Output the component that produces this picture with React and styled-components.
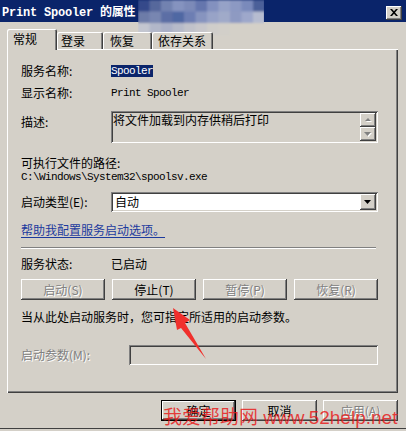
import React from 'react';
import styled, { createGlobalStyle, css } from 'styled-components';

const GlobalStyle = createGlobalStyle`
  html, body { margin: 0; padding: 0; background: #d4d0c8; }
  body {
    font-family: "Noto Sans CJK SC", "Liberation Sans", sans-serif;
    font-size: 12px;
    color: #000;
  }
  * { box-sizing: border-box; }
`;

const raised = css`
  box-shadow: inset -1px -1px #404040, inset 1px 1px #ffffff,
    inset -2px -2px #808080, inset 2px 2px #d4d0c8;
`;

const sunken = css`
  box-shadow: inset 1px 1px #808080, inset -1px -1px #ffffff,
    inset 2px 2px #404040, inset -2px -2px #d4d0c8;
`;

const disabledText = css`
  color: #808080;
  text-shadow: 1px 1px 0 #ffffff;
`;

const Window = styled.div`
  position: relative;
  width: 406px;
  height: 431px;
  overflow: hidden;
  background: #d4d0c8;
  box-shadow: inset 0 -2px 0 #d4d0c8, inset 0 -3px 0 #404040;
`;

const TitleBar = styled.div`
  height: 22px;
  background: #0a246a;
  display: flex;
  align-items: center;
  justify-content: space-between;
  padding: 3px 4px 0 2px;
`;

const TitleText = styled.div`
  color: #ffffff;
  font-family: "Liberation Mono", "Noto Sans CJK SC", monospace;
  font-weight: bold;
  font-size: 12px;
  line-height: 14px;
  letter-spacing: -0.2px;
  white-space: pre;
`;

const CloseButton = styled.div`
  width: 16px;
  height: 14px;
  background: #d4d0c8;
  ${raised};
  display: flex;
  align-items: center;
  justify-content: center;
  padding-bottom: 1px;
`;

const Body = styled.div`
  padding: 7px 8px 0 7px;
`;

const TabStrip = styled.div`
  position: relative;
  z-index: 1;
  height: 20px;
  display: flex;
  align-items: flex-start;
`;

const Tab = styled.div`
  width: ${p => p.$w}px;
  height: ${p => (p.$active ? 21 : 17)}px;
  margin-top: ${p => (p.$active ? 0 : 3)}px;
  background: #d4d0c8;
  border-radius: 2px 2px 0 0;
  box-shadow: inset 1px 1px #ffffff, inset -1px 0 #404040, inset -2px 0 #808080;
  padding: ${p => (p.$active ? 4 : 3)}px 0 0 ${p => p.$pl}px;
  line-height: 12px;
  white-space: nowrap;
`;

const Panel = styled.div`
  width: 391px;
  height: 344px;
  padding: 16px 20px 0 14px;
  box-shadow: inset 1px 1px #ffffff, inset -1px -1px #404040, inset -2px -2px #808080;
  display: flex;
  flex-direction: column;
`;

const Row = styled.div`
  display: flex;
  align-items: ${p => (p.$top ? 'flex-start' : 'center')};
  margin-top: ${p => p.$mt || 0}px;
  min-height: 12px;
  line-height: 12px;
`;

const Label = styled.div`
  width: ${p => p.$w || 90}px;
  flex: none;
  line-height: 12px;
  white-space: nowrap;
  padding-top: ${p => p.$pt || 0}px;
  ${p => p.$disabled && disabledText};
`;

const Mono = styled.span`
  font-family: "Liberation Mono", monospace;
  font-size: 11px;
  letter-spacing: -0.6px;
  line-height: 12px;
  height: 12px;
  display: inline-block;
  white-space: pre;
  background: ${p => (p.$selected ? '#0a246a' : 'transparent')};
  color: ${p => (p.$selected ? '#ffffff' : '#000000')};
`;

const Plain = styled.span`
  line-height: 12px;
  white-space: nowrap;
`;

const DescBox = styled.div`
  width: 267px;
  height: 32px;
  background: #d4d0c8;
  ${sunken};
  display: flex;
  padding: 2px 2px 2px 2px;
`;

const DescText = styled.div`
  flex: 1;
  padding: 1px 0 0 0;
  line-height: 12px;
`;

const ScrollColumn = styled.div`
  width: 16px;
  display: flex;
  flex-direction: column;
`;

const ScrollButton = styled.div`
  width: 16px;
  height: ${p => p.$h}px;
  background: #d4d0c8;
  ${raised};
  display: flex;
  align-items: center;
  justify-content: center;
`;

const Select = styled.div`
  width: 267px;
  height: 20px;
  background: #ffffff;
  ${sunken};
  display: flex;
  align-items: center;
  padding: 2px 2px 2px 4px;
`;

const SelectValue = styled.div`
  flex: 1;
  line-height: 12px;
`;

const DropButton = styled.div`
  width: 16px;
  height: 16px;
  background: #d4d0c8;
  ${raised};
  display: flex;
  align-items: center;
  justify-content: center;
`;

const HelpLink = styled.a`
  color: #1c3a9e;
  text-decoration: underline;
  text-underline-offset: 2px;
  line-height: 12px;
  cursor: pointer;
`;

const Separator = styled.div`
  width: 355px;
  height: 2px;
  margin-top: ${p => p.$mt}px;
  border-top: 1px solid #808080;
  border-bottom: 1px solid #ffffff;
`;

const ButtonRow = styled.div`
  display: flex;
  justify-content: space-between;
  margin-top: ${p => p.$mt}px;
`;

const Button = styled.div`
  width: ${p => p.$w}px;
  height: 21px;
  background: #d4d0c8;
  ${raised};
  ${p =>
    p.$default &&
    css`
      box-shadow: inset 0 0 0 1px #000000, inset -2px -2px #404040, inset 2px 2px #ffffff,
        inset -3px -3px #808080;
    `};
  display: flex;
  align-items: center;
  justify-content: center;
  line-height: 12px;
  white-space: nowrap;
  ${p => p.$disabled && disabledText};
`;

const ParamBox = styled.div`
  width: 249px;
  height: 20px;
  background: #d4d0c8;
  ${sunken};
`;

const DialogButtons = styled.div`
  display: flex;
  justify-content: flex-end;
  gap: 6px;
  margin-top: 7px;
`;

const Mosaic = styled.svg`
  position: absolute;
  left: 138px;
  top: 0;
  pointer-events: none;
`;

const ArrowOverlay = styled.svg`
  position: absolute;
  left: 0;
  top: 0;
  pointer-events: none;
`;

const Watermark = styled.div`
  position: absolute;
  left: 163px;
  top: 408px;
  font-family: "Liberation Sans", "Noto Sans CJK SC", sans-serif;
  font-size: 19px;
  line-height: 20px;
  color: rgba(232, 24, 24, 0.82);
  white-space: pre;
  pointer-events: none;
`;

const UpArrow = ({ color = '#808080', shadow = true }) => (
  <svg width="7" height="5" viewBox="0 0 7 5">
    {shadow && <polygon points="4,1 7,4 1,4" fill="#ffffff" />}
    <polygon points="3,0 6,3 0,3" fill={color} />
  </svg>
);

const DownArrow = ({ color = '#808080', shadow = true, w = 7 }) => (
  <svg width={w + 1} height="5" viewBox={`0 0 ${w + 1} 5`}>
    {shadow && <polygon points={`1,1 ${w + 1},1 ${(w + 2) / 2},5`} fill="#ffffff" />}
    <polygon points={`0,0 ${w},0 ${w / 2},4`} fill={color} />
  </svg>
);

const mosaicRows = [
  ['#34488a', '#56689c', '#7282b0', '#8593bf', '#7b8ab8', '#6576ad', '#8391bf', '#96a2c7', '#8c99c3', '#7a8abb', '#4c6099'],
  ['#6d7ba8', '#7886b1', '#5c6ea5', '#5068a3', '#6d7eb3', '#8794bf', '#98a3c7', '#a0aac9', '#8e9ac2', '#9ea8cb', '#b6bcd0'],
  ['#c3c6d0', '#b2b7c9', '#aab0c7', '#b6bac9', '#c1c2ca', '#c8c7cb', '#cfcdca', '#d2cfc9', '#d4d0c8', '#d4d0c8', '#d4d0c8'],
];

export default function App() {
  return (
    <>
      <GlobalStyle />
      <Window>
        <TitleBar>
          <TitleText>Print Spooler 的属性</TitleText>
          <CloseButton>
            <svg width="8" height="7" viewBox="0 0 8 7">
              <path d="M0 0h2l2 2.2L6 0h2L5 3.5 8 7H6L4 4.8 2 7H0l3-3.5z" fill="#000" />
            </svg>
          </CloseButton>
        </TitleBar>
        <Body>
          <TabStrip>
            <Tab $active $w={50} $pl={6}>常规</Tab>
            <Tab $w={46} $pl={4}>登录</Tab>
            <Tab $w={49} $pl={7}>恢复</Tab>
            <Tab $w={61} $pl={6}>依存关系</Tab>
          </TabStrip>
          <Panel>
            <Row>
              <Label>服务名称:</Label>
              <Mono $selected>Spooler</Mono>
            </Row>
            <Row $mt={10}>
              <Label>显示名称:</Label>
              <Mono>Print Spooler</Mono>
            </Row>
            <Row $mt={12} $top>
              <Label $pt={5}>描述:</Label>
              <DescBox>
                <DescText>将文件加载到内存供稍后打印</DescText>
                <ScrollColumn>
                  <ScrollButton $h={15}><UpArrow /></ScrollButton>
                  <ScrollButton $h={14}><DownArrow /></ScrollButton>
                </ScrollColumn>
              </DescBox>
            </Row>
            <Row $mt={14}>
              <Plain>可执行文件的路径:</Plain>
            </Row>
            <Row $mt={2}>
              <Mono>C:\Windows\System32\spoolsv.exe</Mono>
            </Row>
            <Row $mt={9}>
              <Label>启动类型(E):</Label>
              <Select>
                <SelectValue>自动</SelectValue>
                <DropButton><DownArrow color="#000000" shadow={false} /></DropButton>
              </Select>
            </Row>
            <Row $mt={12}>
              <HelpLink>帮助我配置服务启动选项。</HelpLink>
            </Row>
            <Separator $mt={11} />
            <Row $mt={9}>
              <Label>服务状态:</Label>
              <Plain>已启动</Plain>
            </Row>
            <ButtonRow $mt={9}>
              <Button $w={84} $disabled>启动(S)</Button>
              <Button $w={84}>停止(T)</Button>
              <Button $w={84} $disabled>暂停(P)</Button>
              <Button $w={84} $disabled>恢复(R)</Button>
            </ButtonRow>
            <Row $mt={11}>
              <Plain>当从此处启动服务时，您可指定所适用的启动参数。</Plain>
            </Row>
            <Row $mt={22}>
              <Label $w={108} $disabled>启动参数(M):</Label>
              <ParamBox />
            </Row>
          </Panel>
          <DialogButtons>
            <Button $w={75} $default>确定</Button>
            <Button $w={75}>取消</Button>
            <Button $w={75} $disabled>应用(A)</Button>
          </DialogButtons>
        </Body>

        <Mosaic width="126" height="36" viewBox="0 0 126 36">
          <defs>
            <filter id="soft" x="-5%" y="-5%" width="110%" height="110%">
              <feGaussianBlur stdDeviation="1.2" />
            </filter>
          </defs>
          <g filter="url(#soft)">
            {mosaicRows.map((row, r) =>
              row.map((c, i) => (
                <rect key={`${r}-${i}`} x={i * 11.5} y={r * 11.5} width="12" height="12" fill={c} />
              ))
            )}
          </g>
        </Mosaic>

        <ArrowOverlay width="406" height="431" viewBox="0 0 406 431">
          <polygon points="173,308 190,320 185,323 206,359 181,328 177,330" fill="#f0302c" />
        </ArrowOverlay>

        <Watermark>我爱帮助网 www.52help.net</Watermark>
      </Window>
    </>
  );
}
